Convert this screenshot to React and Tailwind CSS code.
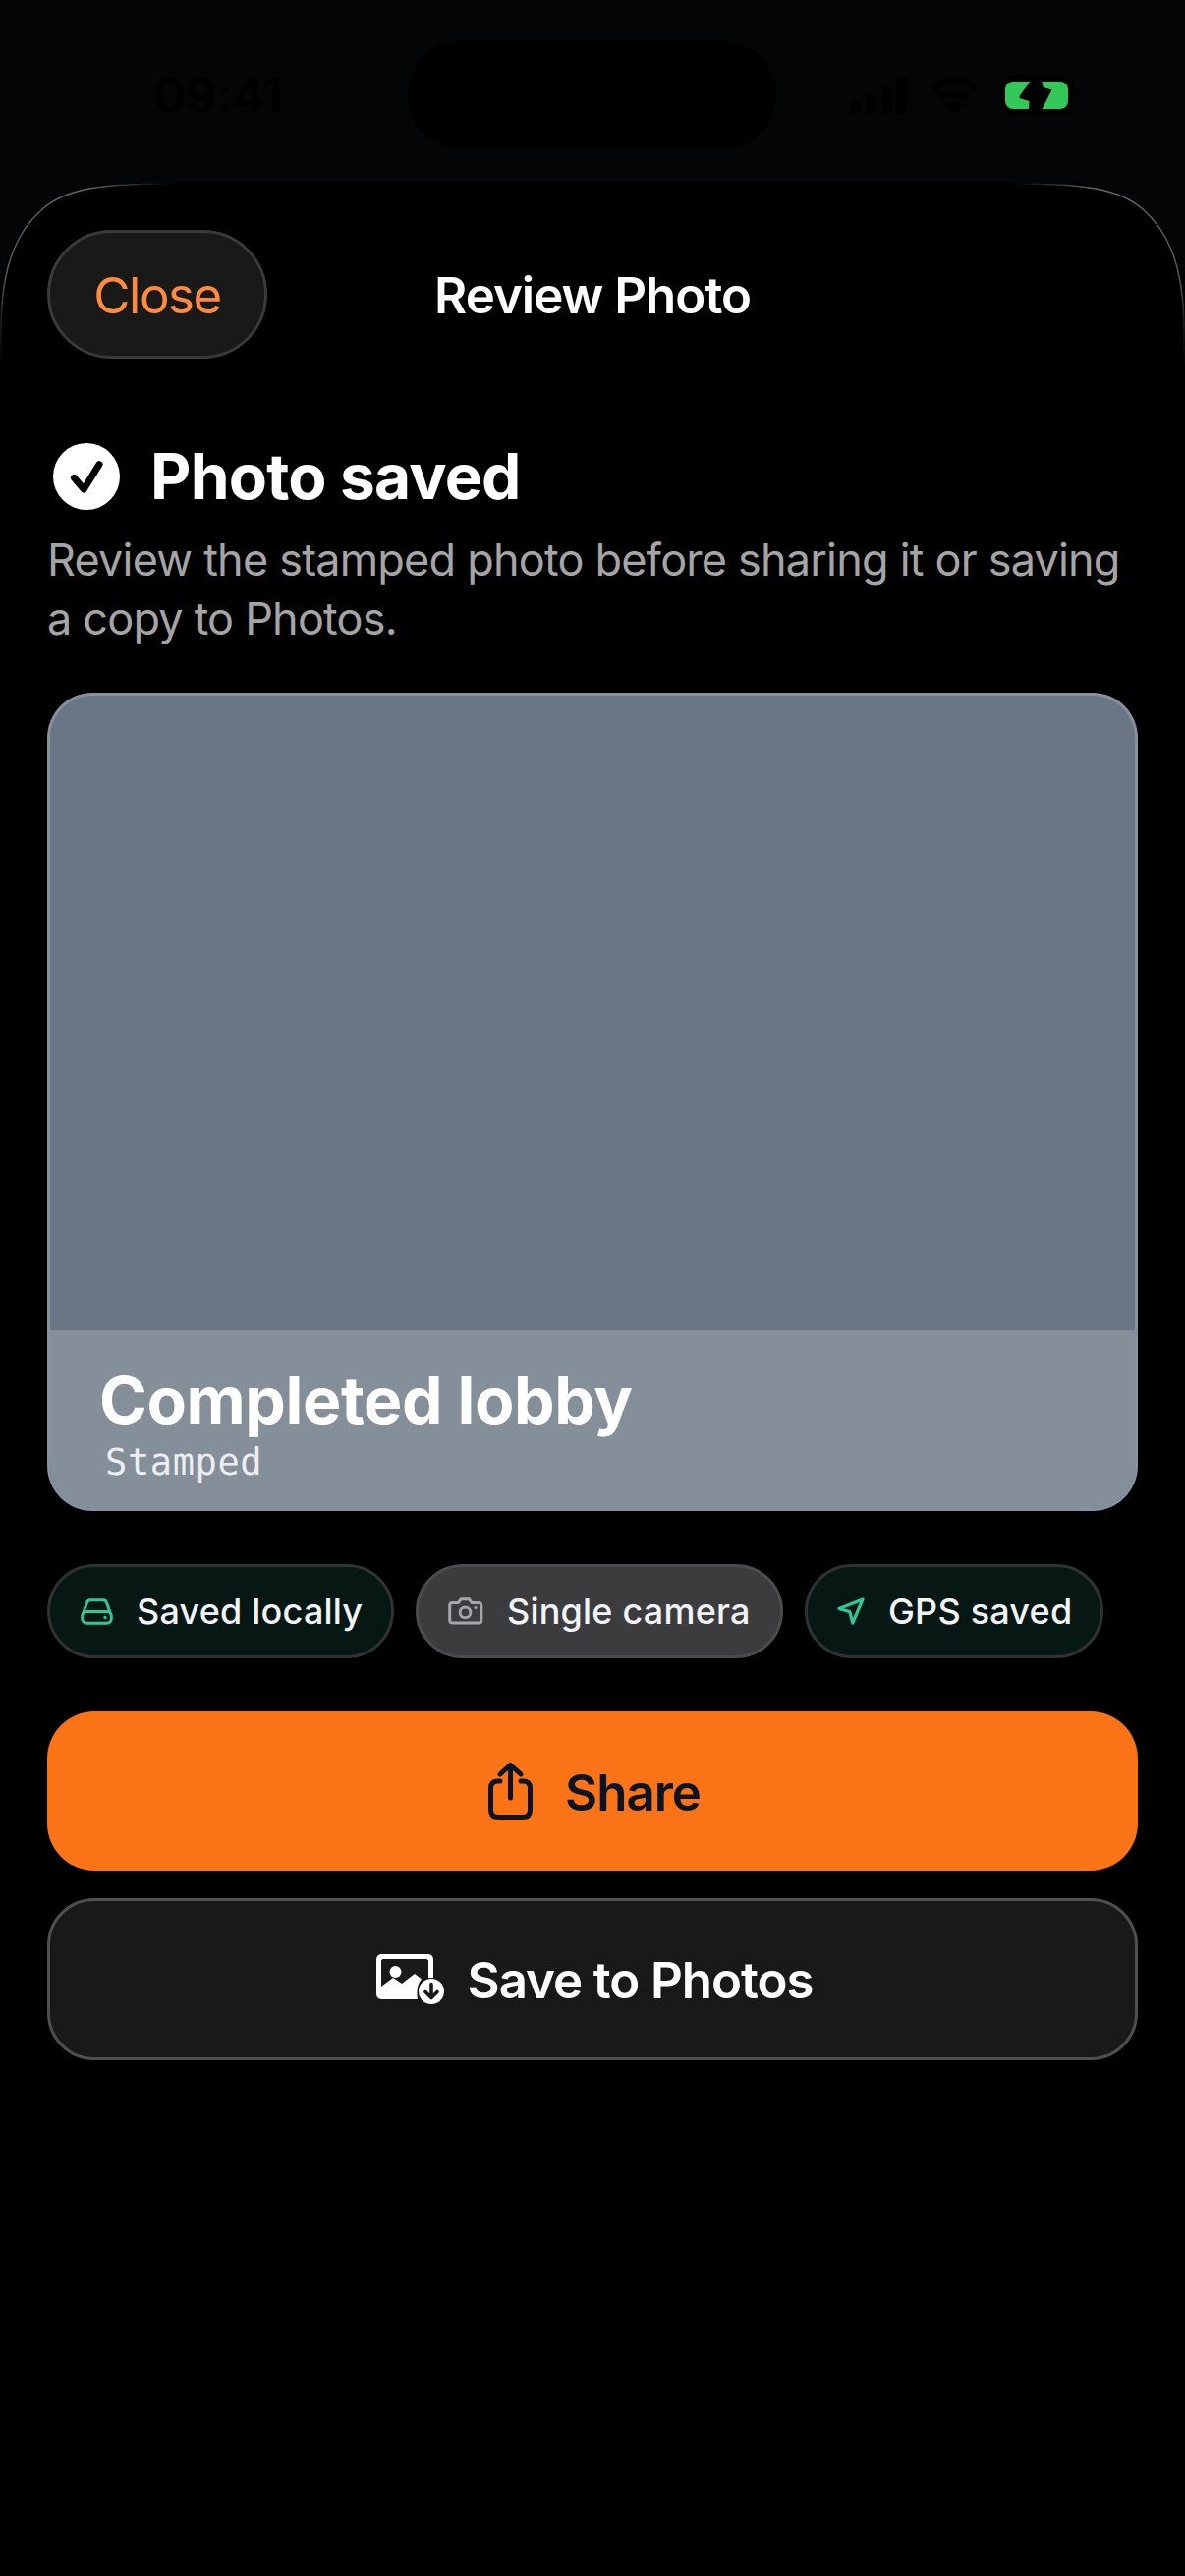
import React from "react";

const inter = "font-['Inter',sans-serif]";

function DriveIcon() {
  return (
    <svg width="33" height="27" viewBox="0 0 33 27" fill="none" stroke="#34c796" strokeWidth="3" strokeLinecap="round" strokeLinejoin="round" className="shrink-0">
      <path d="M2.5 15.5L6.5 4.5C7 2.6 8.2 1.7 10 1.7H23C24.8 1.7 26 2.6 26.5 4.5L30.5 15.5" />
      <rect x="1.7" y="13.5" width="29.6" height="11.8" rx="4.5" />
      <circle cx="25" cy="19.4" r="1.7" fill="#34c796" stroke="none" />
    </svg>
  );
}

function CameraIcon() {
  return (
    <svg width="36" height="28" viewBox="0 0 36 28" fill="none" stroke="#a6a6aa" strokeWidth="3" strokeLinejoin="round" className="shrink-0">
      <path d="M4.5 5.5H10.5L13 1.8H21.5L24 5.5H31C32.6 5.5 33.8 6.7 33.8 8.3V23.2C33.8 24.9 32.6 26 31 26H4.5C2.9 26 1.7 24.9 1.7 23.2V8.3C1.7 6.7 2.9 5.5 4.5 5.5Z" />
      <circle cx="17.5" cy="15.3" r="5.4" />
      <circle cx="28" cy="10.5" r="1.5" fill="#a6a6aa" stroke="none" />
    </svg>
  );
}

function ArrowIcon() {
  return (
    <svg width="28" height="28" viewBox="0 0 28 28" fill="none" stroke="#34c796" strokeWidth="3.2" strokeLinecap="round" strokeLinejoin="round" className="shrink-0">
      <path d="M26 2L2 11.5L12.8 14.6L15.8 26Z" />
    </svg>
  );
}

function Chip({ tone, icon, label, widthClass, padClass }) {
  return (
    <div className={`${widthClass} ${padClass} h-[96px] rounded-full border-[3px] flex items-center gap-[24px] shrink-0 ${tone}`}>
      {icon}
      <span className="text-[36px] leading-[44px] font-medium tracking-[0.2px] text-[#f2f4f8] whitespace-nowrap">{label}</span>
    </div>
  );
}

function Signal() {
  return (
    <svg width="58" height="37" viewBox="0 0 58 37" fill="#000">
      <rect x="0" y="23" width="11" height="14" rx="3" />
      <rect x="16" y="17" width="11" height="20" rx="3" />
      <rect x="32" y="9" width="11" height="28" rx="3" />
      <rect x="47" y="0" width="11" height="37" rx="3" />
    </svg>
  );
}

function Wifi() {
  return (
    <svg width="48" height="38" viewBox="0 0 48 38" fill="none" stroke="#000" strokeWidth="7">
      <path d="M2 13C14 1 34 1 46 13" />
      <path d="M10 23C17 15 31 15 38 23" />
      <path d="M24 38L15 29C20 25 28 25 33 29Z" fill="#000" stroke="none" />
    </svg>
  );
}

function Battery() {
  return (
    <div className="relative w-[64px] h-[28px] rounded-[8px] bg-[#34c759]">
      <svg className="absolute left-[-6px] top-[-6px]" width="84" height="40" viewBox="0 0 84 40">
        <rect x="2" y="2" width="72" height="36" rx="11" fill="none" stroke="#000" strokeWidth="4" />
        <path d="M78 14C81 15 81 25 78 26Z" fill="#000" />
        <path d="M32 5L20.5 21Q20 23 22 23.5L30.5 26L30 35H43L53.5 14.5L44.7 12L43 5Z" fill="#000" />
      </svg>
    </div>
  );
}

function ShareIcon() {
  return (
    <svg width="45" height="58" viewBox="0 0 45 58" fill="none" stroke="#0b1422" strokeWidth="5" strokeLinecap="round" strokeLinejoin="round">
      <path d="M22.5 36V3" />
      <path d="M12 12L22.5 2.5L33 12" />
      <path d="M12 19H10C5 19 2.5 21.5 2.5 26V48C2.5 53 5 55.5 10 55.5H35C40 55.5 42.5 53 42.5 48V26C42.5 21.5 40 19 35 19H33" />
    </svg>
  );
}

function SavePhotoIcon() {
  return (
    <svg width="70" height="52" viewBox="0 0 70 52" fill="none">
      <path fillRule="evenodd" clipRule="evenodd" d="M6 0H52C56 0 58 2 58 6V24H53V7C53 6 52 5 51 5H7C6 5 5 6 5 7V33L17 24L26 30L39 20L46 25.5C42 30 40.5 37 42 46H6C2 46 0 44 0 40V6C0 2 2 0 6 0Z" fill="#fff" />
      <circle cx="19.5" cy="18" r="6" fill="#fff" />
      <circle cx="56" cy="38" r="13" fill="#fff" />
      <path d="M56 30.5V44M50 38.5L56 44.5L62 38.5" stroke="#191919" strokeWidth="3.6" strokeLinecap="round" strokeLinejoin="round" />
    </svg>
  );
}

function Tick() {
  return (
    <svg width="70" height="70" viewBox="0 0 70 70" fill="none" className="shrink-0">
      <circle cx="35" cy="35" r="34" fill="#fff" />
      <path d="M22.5 36.5L32.3 48L48 22.7" stroke="#000" strokeWidth="7" strokeLinecap="round" strokeLinejoin="round" />
    </svg>
  );
}

export default function App() {
  return (
    <div className={`w-[1206px] h-[2622px] bg-[#030507] flex flex-col overflow-hidden ${inter}`}>
      <div className="h-[186px] shrink-0">
        <div className="h-[152px] flex items-center pt-[42px]">
          <span className="w-[415px] pl-[156px] text-[51px] leading-[60px] font-semibold tracking-[-1px] text-black">09:41</span>
          <div className="w-[375px] h-[110px] rounded-[55px] bg-black" />
          <div className="flex-1 pl-[75px] flex items-center gap-[24px]">
            <Signal />
            <Wifi />
            <div className="ml-[4px]"><Battery /></div>
          </div>
        </div>
      </div>

      <div className="relative flex-1 bg-black rounded-t-[120px] px-[48px]">
        <svg className="absolute left-0 top-0 pointer-events-none" width="1206" height="190" viewBox="0 0 1206 190" fill="none">
          <defs>
            <linearGradient id="edgeL" x1="175" y1="0" x2="0" y2="185" gradientUnits="userSpaceOnUse">
              <stop offset="0" stopColor="#666" stopOpacity="0" />
              <stop offset="0.25" stopColor="#666" />
              <stop offset="0.75" stopColor="#555" />
              <stop offset="1" stopColor="#333" stopOpacity="0" />
            </linearGradient>
            <linearGradient id="edgeR" x1="1031" y1="0" x2="1206" y2="185" gradientUnits="userSpaceOnUse">
              <stop offset="0" stopColor="#666" stopOpacity="0" />
              <stop offset="0.25" stopColor="#666" />
              <stop offset="0.75" stopColor="#555" />
              <stop offset="1" stopColor="#333" stopOpacity="0" />
            </linearGradient>
          </defs>
          <path d="M175 1C105 1 68 5 43 27C20 47 1 80 1 150V185" stroke="url(#edgeL)" strokeWidth="1.5" />
          <path d="M1031 1C1101 1 1138 5 1163 27C1186 47 1205 80 1205 150V185" stroke="url(#edgeR)" strokeWidth="1.5" />
        </svg>

        <div className="relative h-[131px] mt-[48px] flex items-center justify-center">
          <div className="absolute left-0 top-0 w-[224px] h-[131px] rounded-[66px] bg-[#191919] border-[3px] border-[#3a3a3a] flex items-center justify-center">
            <span className="pt-[3px] text-[51px] leading-[60px] tracking-[-1.5px] text-[#ff8a3d]">Close</span>
          </div>
          <span className="pt-[3px] text-[51px] leading-[60px] font-semibold tracking-[-1px] text-white">Review Photo</span>
        </div>

        <div className="mt-[84px] flex items-center h-[72px] pl-[5px] gap-[30px]">
          <Tick />
          <span className="text-[64px] leading-[72px] font-bold text-white tracking-[-0.8px]">Photo saved</span>
        </div>

        <p className="mt-[19px] text-[45px] leading-[60px] tracking-[-0.8px] text-[#a5a5a5]">
          Review the stamped photo before sharing it or saving a copy to Photos.
        </p>

        <div className="mt-[45px] h-[833px] rounded-[46px] border-[3px] border-white/20 bg-[#6a7585] overflow-hidden flex flex-col justify-end">
          <div className="h-[181px] bg-[#848f9a] pl-[50px] pt-[33px]">
            <div className="text-[66px] leading-[76px] font-bold text-white tracking-[-0.4px]">Completed lobby</div>
            <div className="pl-[6px] pt-[8px] font-['DejaVu_Sans_Mono',monospace] text-[37px] leading-[36px] tracking-[0.6px] text-[#eceef2]">Stamped</div>
          </div>
        </div>

        <div className="mt-[54px] flex gap-[22px]">
          <Chip tone="bg-[#071714] border-[#2e3332]" padClass="pl-[31px]" icon={<DriveIcon />} label="Saved locally" widthClass="w-[353px]" />
          <Chip tone="bg-[#3c3c3e] border-[#4c4c4e]" padClass="pl-[30px]" icon={<CameraIcon />} label="Single camera" widthClass="w-[374px]" />
          <Chip tone="bg-[#071714] border-[#2e3332]" padClass="pl-[30px]" icon={<ArrowIcon />} label="GPS saved" widthClass="w-[304px]" />
        </div>

        <div className="mt-[54px] h-[162px] rounded-[48px] bg-[#fb7317] flex items-center justify-center gap-[33px] pl-[4px]">
          <ShareIcon />
          <span className="pt-[4px] text-[51px] leading-[60px] font-semibold tracking-[-1px] text-[#0b1422]">Share</span>
        </div>

        <div className="mt-[28px] h-[165px] rounded-[48px] bg-[#191919] border-[3px] border-[#4f4f4f] flex items-center justify-center gap-[23px] pl-[4px]">
          <SavePhotoIcon />
          <span className="pt-[2px] text-[51px] leading-[60px] font-semibold tracking-[-1.07px] text-white">Save to Photos</span>
        </div>
      </div>
    </div>
  );
}
